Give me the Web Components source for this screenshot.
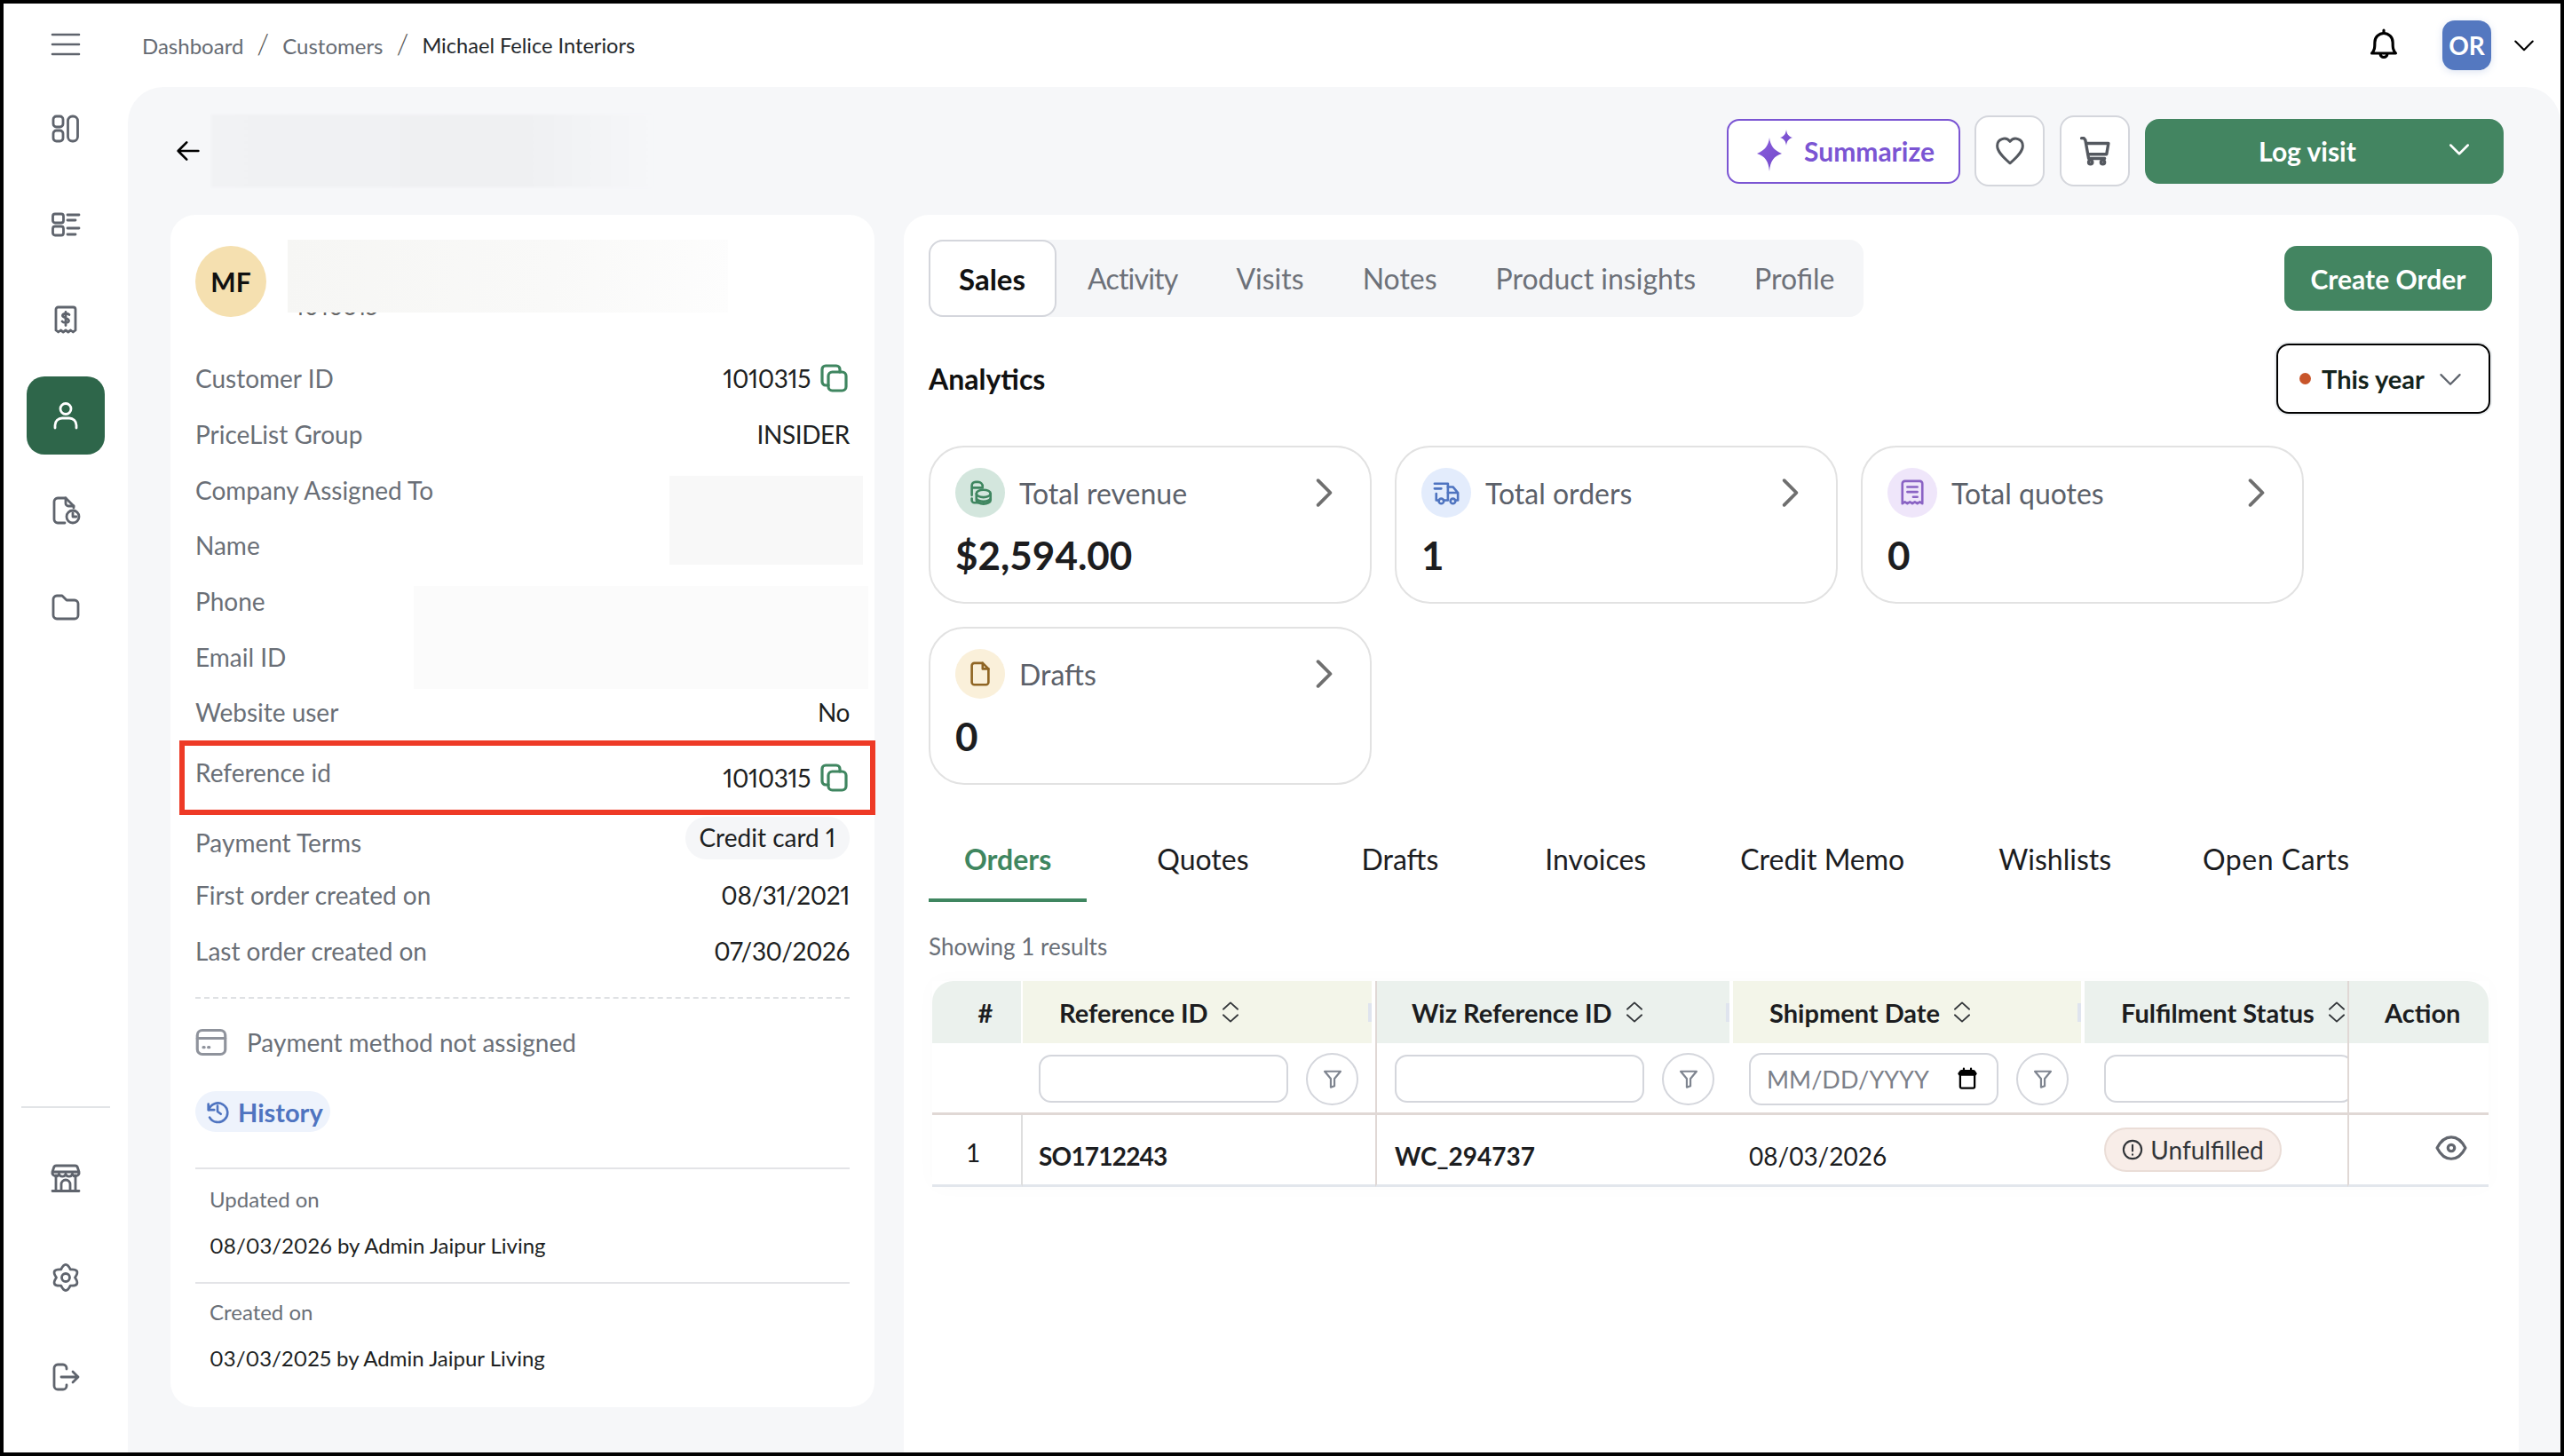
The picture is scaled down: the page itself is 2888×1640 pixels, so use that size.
<!DOCTYPE html>
<html lang="en">
<head>
<meta charset="utf-8">
<title>Michael Felice Interiors</title>
<style>
  html, body { margin: 0; height: 100%; background: #000; overflow: hidden; }
  body { font-family: "Lato", "Liberation Sans", sans-serif; }
</style>
</head>
<body>
<crm-app></crm-app>
<script>
/**
 * Icon paths, all drawn on a 32 x 32 box with a round stroke.
 */
const ICONS = {
  menu: '<path d="M1 5h30M1 16h30M1 27h30"/>',
  dashboard: '<rect x="2" y="2" width="11" height="12" rx="3.5"/><rect x="2" y="18" width="11" height="12" rx="3.5"/><rect x="18.500" y="2" width="11" height="28" rx="5"/>',
  list: '<rect x="1.500" y="4" width="12" height="10" rx="2.500"/><rect x="1.500" y="18" width="12" height="10" rx="2.500"/><path d="M18 5h13M18 11h9M18 20h13M18 27h9"/>',
  receipt: '<path d="M5 28V4.500A2.500 2.500 0 0 1 7.500 2h17A2.500 2.500 0 0 1 27 4.500V28l-2.700 2-2.700-2-2.800 2-2.800-2-2.800 2-2.800-2-2.700 2z"/><path d="M20 10.500c-1-1.500-6.500-2-7.500.5-1 3.500 7.500 2.500 7 6.500-.5 2.500-6 2.500-7.500.5M16 7.500v15"/>',
  user: '<circle cx="16" cy="8.500" r="6"/><path d="M4 30v-3a8 8 0 0 1 8-8h8a8 8 0 0 1 8 8v3"/>',
  fileclock: '<path d="M15 30H7a4 4 0 0 1-4-4V6a4 4 0 0 1 4-4h9l9 9v2"/><path d="M16 2v6a3 3 0 0 0 3 3h6"/><circle cx="24" cy="23" r="7"/><path d="M24 19v4h4"/>',
  folder: '<path d="M2 8a4 4 0 0 1 4-4h6l5 5h9a4 4 0 0 1 4 4v13a4 4 0 0 1-4 4H6a4 4 0 0 1-4-4z"/>',
  store: '<path d="M1 30.500h30M5 13v17.500M27 13v17.500M11 30.500V23a5 5 0 0 1 10 0v7.500"/><path d="M5.500 2h21a3 3 0 0 1 3 2.500L31 9a4 4 0 0 1-7.500 2.500 4 4 0 0 1-7.500 0 4 4 0 0 1-7.500 0A4 4 0 0 1 1 9l1.500-4.500a3 3 0 0 1 3-2.500zM1 9h30"/>',
  gear: '<circle cx="16" cy="16" r="4.500"/><path d="M10.750 6.900Q16-4 21.250 6.900Q33.300 6 26.500 16Q33.300 26 21.250 25.100Q16 36 10.750 25.100Q-1.300 26 5.500 16Q-1.300 6 10.750 6.900z"/>',
  logout: '<path d="M17 7V6a4 4 0 0 0-4-4H7a4 4 0 0 0-4 4v20a4 4 0 0 0 4 4h6a4 4 0 0 0 4-4v-1"/><path d="M11 16h19M24 10l6 6-6 6"/>',
  bell: '<path d="M4 24c3-3 3-6 3-11a9 9 0 0 1 18 0c0 5 0 8 3 11z"/><path d="M16 1v3M12.500 24.500a3.500 3.500 0 0 0 7 0"/>',
  chevdown: '<path d="M3 10l13 13 13-13"/>',
  chevright: '<path d="M10 3l13 13-13 13"/>',
  back: '<path d="M29 16H3M14 5L3 16l11 11"/>',
  copy: '<rect x="10" y="9" width="20" height="21" rx="4.500"/><path d="M10 24H7a4 4 0 0 1-4-4V6a4 4 0 0 1 4-4h12a4 4 0 0 1 4 4v3"/>',
  heart: '<path d="M16 29C8 22 2.500 16.500 2.500 10.500A7.500 7.500 0 0 1 16 6a7.500 7.500 0 0 1 13.500 4.500C29.500 16.500 24 22 16 29z"/>',
  cart: '<path d="M1.500 2.500h2.500l1.500 2L9 24h17"/><path d="M6.500 8H30l-2 11.500H8.500"/><circle cx="11" cy="28" r="2"/><circle cx="24" cy="28" r="2"/>',
  card: '<rect x="2" y="4" width="28" height="24" rx="5"/><path d="M2 12h28M8 21h1M13 21h1"/>',
  history: '<path d="M5 7v7h7"/><path d="M5.500 14a11.500 11.500 0 1 1 1 9"/><path d="M16 9v7l4 3"/>',
  coins: '<path d="M13 28H9a3 3 0 0 1-3-3v-2M6 19V7.500A4.500 4.500 0 0 1 10.500 3h3A5.500 5.500 0 0 1 19 8.500M6 10h13"/><ellipse cx="20" cy="17" rx="8.500" ry="4.500"/><path d="M11.500 17v8c0 2.500 4 4.500 8.500 4.500s8.500-2 8.500-4.500v-8M11.500 22c0 2.500 4 4.500 8.500 4.500s8.500-2 8.500-4.500"/>',
  truck: '<path d="M7 25H4V17M2 5h16v20h-5M2 11h8"/><path d="M18 9h6l6 7v9h-3M18 16h12"/><circle cx="10" cy="26" r="3"/><circle cx="24" cy="26" r="3"/>',
  quote: '<path d="M4 29V5a3 3 0 0 1 3-3h18a3 3 0 0 1 3 3v24l-3-2-3 2-3-2-3 2-3-2-3 2-3-2z"/><path d="M10 9h12M10 15h12M17 21h5"/>',
  doc: '<path d="M6 6a3 3 0 0 1 3-3h10l7 7v16a3 3 0 0 1-3 3H9a3 3 0 0 1-3-3z"/><path d="M19 3v7h7"/>',
  updown: '<path d="M6 12l10-9 10 9M6 20l10 9 10-9"/>',
  filter: '<path d="M3 4h26L19 16v12l-6 2V16z"/>',
  eye: '<path d="M1 16C5 8 10 4.500 16 4.500S27 8 31 16C27 24 22 27.500 16 27.500S5 24 1 16z"/><circle cx="16" cy="16" r="3.500"/>',
  alert: '<circle cx="16" cy="16" r="13.500"/><path d="M16 9v9M16 23v.5"/>',
  calendar: '<rect x="6" y="5" width="20" height="24" rx="2"/><path d="M6 9h20" stroke-width="6"/><path d="M11 2v3M21 2v3"/>'
}

/**
 * Draws one icon from the table above.
 */
customElements.define('app-icon',
  class extends HTMLElement {
    constructor () {
      super()
      this.attachShadow({ mode: 'open' })
    }

    connectedCallback () {
      const width = this.getAttribute('stroke') || 2.8
      this.shadowRoot.innerHTML = `
        <style>
          :host { display: inline-flex; width: var(--size, 32px); height: var(--size, 32px); flex: none; }
          svg { width: 100%; height: 100%; fill: none; stroke: currentColor; stroke-linecap: round; stroke-linejoin: round; overflow: visible; }
        </style>
        <svg viewBox="0 0 32 32" stroke-width="${width}">${ICONS[this.getAttribute('name')]}</svg>`
    }
  }
)

/**
 * Sidebar with the main navigation.
 */
const sidebarTemplate = document.createElement('template')
sidebarTemplate.innerHTML = `
  <style>
    :host { display: flex; flex-direction: column; align-items: center; width: 140px; height: 100%; padding-top: 30px; box-sizing: border-box; color: #5f646d; }
    .menu { --size: 32px; margin-bottom: 35px; }
    .item { width: 88px; height: 88px; margin-bottom: 19.600px; border-radius: 20px; display: flex; align-items: center; justify-content: center; --size: 32px; flex: none; }
    .item.active { background: #2e664a; color: #fff; }
    .push { flex: 1; }
    .rule { width: 100px; height: 2px; background: #e2e4e7; margin-bottom: 35px; }
    .item.low { margin-bottom: 24px; }
  </style>
  <app-icon class="menu" name="menu" stroke="2.600"></app-icon>
  <div class="item"><app-icon name="dashboard"></app-icon></div>
  <div class="item"><app-icon name="list"></app-icon></div>
  <div class="item"><app-icon name="receipt"></app-icon></div>
  <div class="item active"><app-icon name="user"></app-icon></div>
  <div class="item"><app-icon name="fileclock"></app-icon></div>
  <div class="item"><app-icon name="folder"></app-icon></div>
  <div class="push"></div>
  <div class="rule"></div>
  <div class="item low"><app-icon name="store"></app-icon></div>
  <div class="item low"><app-icon name="gear"></app-icon></div>
  <div class="item low" style="margin-bottom:41px"><app-icon name="logout"></app-icon></div>
`
customElements.define('app-sidebar',
  class extends HTMLElement {
    constructor () {
      super()
      this.attachShadow({ mode: 'open' }).appendChild(sidebarTemplate.content.cloneNode(true))
    }
  }
)

/**
 * Top bar with breadcrumbs, the bell and the user menu.
 */
const headerTemplate = document.createElement('template')
headerTemplate.innerHTML = `
  <style>
    :host { display: flex; align-items: center; height: 94px; padding: 0 29px 0 16px; box-sizing: border-box; background: #fff; flex: none; }
    .crumbs { display: flex; align-items: center; font-size: 24px; color: #666b73; }
    .crumbs i { font-style: normal; font-size: 32px; margin: 0 15px; color: #555; font-weight: 300; position: relative; top: -3px; }
    .crumbs b { font-weight: 400; color: #25282c; font-size: 23.600px; }
    .push { flex: 1; }
    .bell { --size: 36px; color: #000; margin-right: 48px; }
    .avatar { width: 55px; height: 56px; border-radius: 14px; background: #5478c0; color: #fff; font-size: 28px; font-weight: 700; display: flex; align-items: center; justify-content: center; box-shadow: 0 2px 8px rgba(84,120,192,.2); margin-right: 25px; }
    .chev { --size: 24px; color: #000; }
  </style>
  <div class="crumbs"><span>Dashboard</span><i>/</i><span>Customers</span><i>/</i><b>Michael Felice Interiors</b></div>
  <div class="push"></div>
  <app-icon class="bell" name="bell"></app-icon>
  <div class="avatar">OR</div>
  <app-icon class="chev" name="chevdown"></app-icon>
`
customElements.define('app-header',
  class extends HTMLElement {
    constructor () {
      super()
      this.attachShadow({ mode: 'open' }).appendChild(headerTemplate.content.cloneNode(true))
    }
  }
)

/**
 * Action bar above the two cards.
 */
const toolbarTemplate = document.createElement('template')
toolbarTemplate.innerHTML = `
  <style>
    :host { display: flex; align-items: center; height: 80px; margin: 0 64px 32px 0; }
    .back { --size: 28px; color: #000; margin-left: 6px; }
    .blur { width: 497px; height: 82px; margin-left: 12px; background: linear-gradient(90deg, #f1f2f4, #eff0f2 70%, #f6f7f9); filter: blur(1px); }
    .push { flex: 1; }
    button { font: inherit; display: flex; align-items: center; justify-content: center; box-sizing: border-box; background: #fff; cursor: pointer; }
    .summarize { width: 263px; height: 73px; border: 2px solid #7b55d3; border-radius: 14px; color: #7b55d3; font-size: 30px; font-weight: 700; gap: 8px; padding: 0; margin-right: 16px; }
    .summarize svg { width: 50px; height: 50px; }
    .square { width: 79px; height: 80px; border: 2px solid #d4d6dc; border-radius: 16px; margin-right: 17px; color: #54585f; padding: 0; --size: 34px; }
    .log { width: 404px; height: 73px; border: 0; border-radius: 16px; background: #438561; color: #fff; font-size: 30px; font-weight: 700; position: relative; padding-right: 44px; }
    .log app-icon { --size: 24px; position: absolute; right: 38px; top: 22px; }
  </style>
  <app-icon class="back" name="back" stroke="3"></app-icon>
  <div class="blur"></div>
  <div class="push"></div>
  <button class="summarize">
    <svg viewBox="0 0 50 50"><defs><linearGradient id="spark" x1="0" y1="0" x2="1" y2="1"><stop offset="0" stop-color="#8f63e0"/><stop offset="1" stop-color="#6b42c4"/></linearGradient></defs>
      <path fill="url(#spark)" d="M19 10c1 9 5 14 14 18-9 3-13 8-14 20-1-12-5-17-14-20 9-4 13-9 14-18zM38 1c.6 5 2.500 7.500 7 9-4.500 1.500-6.400 4-7 9-.6-5-2.500-7.500-7-9 4.500-1.500 6.400-4 7-9z"/></svg>
    Summarize
  </button>
  <button class="square"><app-icon name="heart"></app-icon></button>
  <button class="square"><app-icon name="cart" stroke="3.200"></app-icon></button>
  <button class="log">Log visit<app-icon name="chevdown" stroke="3.400"></app-icon></button>
`
customElements.define('page-toolbar',
  class extends HTMLElement {
    constructor () {
      super()
      this.attachShadow({ mode: 'open' }).appendChild(toolbarTemplate.content.cloneNode(true))
    }
  }
)

/**
 * One label and value line of the customer card.
 */
const rowTemplate = document.createElement('template')
rowTemplate.innerHTML = `
  <style>
    :host { display: flex; justify-content: space-between; align-items: center; height: var(--row, 62.700px); font-size: 28px; color: #1d1f22; font-variant-numeric: proportional-nums; }
    .label { color: #6a6f77; }
    .value { display: flex; align-items: center; gap: 10px; letter-spacing: -.4px; }
  </style>
  <span class="label"><slot name="label"></slot></span>
  <span class="value"><slot></slot></span>
`
customElements.define('detail-row',
  class extends HTMLElement {
    constructor () {
      super()
      this.attachShadow({ mode: 'open' }).appendChild(rowTemplate.content.cloneNode(true))
    }
  }
)

/**
 * Customer card on the left.
 */
const customerTemplate = document.createElement('template')
customerTemplate.innerHTML = `
  <style>
    :host { display: block; position: relative; box-sizing: border-box; height: 1343px; padding: 35px 28px 0; background: #fff; border-radius: 28px; }
    .top { display: flex; align-items: center; height: 80px; margin-bottom: 38px; gap: 24px; }
    .avatar { width: 80px; height: 80px; border-radius: 50%; background: #f5e0b0; font-size: 30px; font-weight: 700; color: #111; display: flex; align-items: center; justify-content: center; }
    .code { font-size: 26px; color: #666; padding: 55px 0 0 8px; font-variant-numeric: proportional-nums; }
    .patch { position: absolute; }
    .copy { --size: 32px; color: #3f8660; margin-right: 2px; }
    .pill { display: inline-block; margin-top: 5px; padding: 0 16px; height: 48px; line-height: 46px; background: #f5f6f8; border-radius: 24px; letter-spacing: 0; }
    .terms { --row: 62px; align-items: flex-start; }
    .terms span[slot=label] { display: block; margin-top: 17px; }
    .ref { --row: 81px; }
    .ref span[slot=label] { display: block; position: relative; top: -4px; }
    .nudge { display: flex; align-items: center; gap: 10px; margin-top: 3px; }
    .frame { position: absolute; left: 10px; top: 592px; width: 784px; height: 84px; box-sizing: border-box; border: 6px solid #ee3a26; pointer-events: none; }
    .dash { border-top: 2px dashed #dfe1e4; margin-top: 21px; }
    .method { display: flex; align-items: center; gap: 22px; height: 98px; margin-bottom: 6px; font-size: 28px; color: #6a6f77; }
    .method app-icon { --size: 36px; color: #8f939c; }
    .history { display: inline-flex; align-items: center; gap: 8px; height: 46px; padding: 0 10px; width: 152px; box-sizing: border-box; background: #eef3fc; border-radius: 23px; color: #4f74c0; font-size: 29px; font-weight: 700; --size: 30px; }
    .audit { border-top: 2px solid #e3e4e7; padding: 0 16px; height: 127px; display: flex; flex-direction: column; font-size: 24px; color: #1d1f22; font-variant-numeric: proportional-nums; }
    .audit span { color: #6a6f77; margin: 19px 0 22px; line-height: 30px; }
    .audit.late span { margin-top: 17px; }
    .audit div { line-height: 30px; }
  </style>
  <div class="top">
    <div class="avatar">MF</div>
    <div class="code">1010315</div>
  </div>
  <div class="patch" style="left:132px;top:28px;width:496px;height:82px;background:linear-gradient(100deg,#f6f6f4,#f9f9f8 60%,#fdfdfd)"></div>
  <div class="patch" style="left:562px;top:294px;width:218px;height:100px;background:#f8f8f8"></div>
  <div class="patch" style="left:274px;top:418px;width:512px;height:116px;background:#fbfbfb"></div>
  <detail-row><span slot="label">Customer ID</span>1010315<app-icon class="copy" name="copy" stroke="3.200"></app-icon></detail-row>
  <detail-row><span slot="label">PriceList Group</span>INSIDER</detail-row>
  <detail-row><span slot="label">Company Assigned To</span></detail-row>
  <detail-row><span slot="label">Name</span></detail-row>
  <detail-row><span slot="label">Phone</span></detail-row>
  <detail-row><span slot="label">Email ID</span></detail-row>
  <detail-row><span slot="label">Website user</span>No</detail-row>
  <detail-row class="ref"><span slot="label">Reference id</span><span class="nudge">1010315<app-icon class="copy" name="copy" stroke="3.200"></app-icon></span></detail-row>
  <detail-row class="terms"><span slot="label">Payment Terms</span><span class="pill">Credit card 1</span></detail-row>
  <detail-row><span slot="label">First order created on</span>08/31/2021</detail-row>
  <detail-row><span slot="label">Last order created on</span>07/30/2026</detail-row>
  <div class="frame"></div>
  <div class="dash"></div>
  <div class="method"><app-icon name="card"></app-icon>Payment method not assigned</div>
  <div class="history"><app-icon name="history"></app-icon>History</div>
  <div style="height:40px"></div>
  <div class="audit"><span>Updated on</span><div>08/03/2026 by Admin Jaipur Living</div></div>
  <div class="audit late"><span>Created on</span><div>03/03/2025 by Admin Jaipur Living</div></div>
`
customElements.define('customer-card',
  class extends HTMLElement {
    constructor () {
      super()
      this.attachShadow({ mode: 'open' }).appendChild(customerTemplate.content.cloneNode(true))
    }
  }
)

/**
 * One number tile of the analytics grid.
 */
const statTemplate = document.createElement('template')
statTemplate.innerHTML = `
  <style>
    :host { display: block; box-sizing: border-box; height: 178px; padding: 23px 28px 0; border: 2px solid #e2e2e2; border-radius: 40px; background: #fff; }
    .head { display: flex; align-items: center; gap: 16px; height: 56px; font-size: 32px; color: #5c616a; }
    .circle { width: 56px; height: 56px; border-radius: 50%; background: var(--tint); color: var(--ink); display: flex; align-items: center; justify-content: center; --size: 30px; }
    .title { flex: 1; }
    .arrow { --size: 34px; color: #6f6f6f; margin-right: 7px; }
    .value { font-size: 44px; font-weight: 700; color: #1c1d1f; margin-top: 16px; line-height: 52px; }
  </style>
  <div class="head">
    <div class="circle"><slot name="icon"></slot></div>
    <div class="title"><slot name="title"></slot></div>
    <app-icon class="arrow" name="chevright" stroke="3.600"></app-icon>
  </div>
  <div class="value"><slot></slot></div>
`
customElements.define('stat-card',
  class extends HTMLElement {
    constructor () {
      super()
      this.attachShadow({ mode: 'open' }).appendChild(statTemplate.content.cloneNode(true))
    }
  }
)

/**
 * Orders table.
 */
const tableTemplate = document.createElement('template')
tableTemplate.innerHTML = `
  <style>
    :host { display: grid; grid-template-columns: 102px 397px 403px 396px 296px 159px; grid-template-rows: 70px 81px 81px; width: 1753px; margin-left: 4px; font-size: 28px; color: #1c1d1f; background: #fff; box-shadow: 0 0 24px rgba(0,0,0,.02); }
    .head { display: flex; align-items: center; font-size: 29px; font-weight: 700; margin-right: 4px; padding-left: 41px; position: relative; gap: 12px; background: var(--bg); white-space: nowrap; }
    .head.wall { padding-left: 39px; }
    .head app-icon { --size: 26px; color: #33363a; }
    .head.tick::after { content: ""; position: absolute; right: 0; top: 25px; width: 4px; height: 21px; background: #dfe4ee; }
    .green { --bg: #ebf1ed; }
    .lime { --bg: #f3f5e9; }
    .num { justify-content: center; padding: 0 0 0 20px; margin-right: 2px; border-top-left-radius: 24px; }
    .action { padding-left: 40px; margin: 0; border-top-right-radius: 24px; border-left: 2px solid #e0d8d5; }
    .wall { border-left: 2px solid #e0d8d5; }
    .filter { display: flex; align-items: center; gap: 20px; padding: 2px 0 0 18px; border-bottom: 3px solid #e0d8d5; overflow: hidden; min-width: 0; }
    .filter.wall { padding-left: 20px; }
    .filter.no-pad { padding-left: 0; }
    .filter.status { padding-left: 22px; }
    .field { box-sizing: border-box; width: 281px; height: 54px; border: 2px solid #d4d6dc; border-radius: 14px; background: #fff; flex: none; }
    .field.date { height: 59px; color: #7c8089; font-size: 27px; display: flex; align-items: center; justify-content: space-between; padding: 0 20px 0 18px; }
    .field.date app-icon { --size: 26px; color: #000; }
    .round { box-sizing: border-box; width: 59px; height: 59px; border: 2px solid #d4d6dc; border-radius: 50%; display: flex; align-items: center; justify-content: center; color: #7f8590; --size: 22px; flex: none; }
    .cell { display: flex; align-items: center; padding: 13px 0 0 18px; border-bottom: 3px solid #e2e6ec; }
    .cell.wall { padding-left: 20px; }
    .cell.status { padding-left: 22px; }
    .idx { justify-content: center; padding: 6px 8px 0 0; border-right: 2px solid #dedede; }
    .strong { font-weight: 700; }
    .tight { letter-spacing: -.8px; }
    .badge { display: inline-flex; align-items: center; gap: 8px; height: 50px; width: 200px; box-sizing: border-box; justify-content: center; margin-top: -13px; border: 2px solid #eaddd7; border-radius: 25px; background: #f8ede8; --size: 24px; font-size: 28px; color: #33363a; }
    .cell.eye { justify-content: flex-end; padding: 20px 25px 0 0; color: #62666e; --size: 34px; align-items: flex-start; }
  </style>
  <div class="head num green">#</div>
  <div class="head lime tick">Reference ID<app-icon name="updown" stroke="2.200"></app-icon></div>
  <div class="head green tick wall">Wiz Reference ID<app-icon name="updown" stroke="2.200"></app-icon></div>
  <div class="head lime tick">Shipment Date<app-icon name="updown" stroke="2.200"></app-icon></div>
  <div class="head green" style="margin:0;padding-right:0">Fulfilment Status<app-icon name="updown" stroke="2.200"></app-icon></div>
  <div class="head green action">Action</div>

  <div class="filter no-pad"></div>
  <div class="filter"><div class="field"></div><div class="round"><app-icon name="filter" stroke="3.200"></app-icon></div></div>
  <div class="filter wall"><div class="field"></div><div class="round"><app-icon name="filter" stroke="3.200"></app-icon></div></div>
  <div class="filter"><div class="field date">MM/DD/YYYY<app-icon name="calendar"></app-icon></div><div class="round"><app-icon name="filter" stroke="3.200"></app-icon></div></div>
  <div class="filter status"><div class="field"></div></div>
  <div class="filter no-pad wall"></div>

  <div class="cell idx">1</div>
  <div class="cell strong tight">SO1712243</div>
  <div class="cell strong wall">WC_294737</div>
  <div class="cell">08/03/2026</div>
  <div class="cell status"><span class="badge"><app-icon name="alert"></app-icon>Unfulfilled</span></div>
  <div class="cell eye wall"><app-icon name="eye" stroke="3"></app-icon></div>
`
customElements.define('orders-table',
  class extends HTMLElement {
    constructor () {
      super()
      this.attachShadow({ mode: 'open' }).appendChild(tableTemplate.content.cloneNode(true))
    }
  }
)

/**
 * Sales panel on the right.
 */
const salesTemplate = document.createElement('template')
salesTemplate.innerHTML = `
  <style>
    :host { display: block; box-sizing: border-box; padding: 28px 30px 0 28px; background: #fff; border-radius: 28px 28px 0 0; height: 100%; }
    .tabs-row { display: flex; justify-content: space-between; align-items: center; height: 87px; }
    .tabs { display: flex; align-items: center; height: 87px; border-radius: 16px; background: #f5f6f8; font-size: 32px; color: #6d7179; }
    .tabs span { padding: 0 33px; }
    .tabs .on { display: flex; align-items: center; height: 100%; box-sizing: border-box; background: #fff; border: 2px solid #d4d6dc; border-radius: 16px; color: #111; font-weight: 700; font-size: 33px; padding: 0 33px 0 32px; }
    .tabs .narrow { letter-spacing: -.8px; margin-left: 2px; }
    .create { box-sizing: border-box; width: 234px; height: 73px; border: 0; padding: 0; border-radius: 14px; background: #438561; color: #fff; font: inherit; font-size: 30px; font-weight: 700; }
    .title-row { display: flex; justify-content: space-between; align-items: center; height: 79px; margin: 30px 2px 36px 0; }
    h2 { margin: 0; font-size: 32px; font-weight: 700; color: #111; }
    .range { display: flex; align-items: center; box-sizing: border-box; width: 241px; height: 79px; padding: 0 18px 0 24px; gap: 12px; border: 2px solid #000; border-radius: 14px; font-size: 29px; font-weight: 700; color: #13231c; box-shadow: 0 0 0 2px #eceff1; }
    .range i { width: 13px; height: 13px; border-radius: 50%; background: #c8552a; }
    .range app-icon { --size: 26px; color: #5f646d; margin-left: 4px; }
    .grid { display: grid; grid-template-columns: repeat(3, 499px); gap: 26px; }
    .sub { display: flex; align-items: center; height: 73px; margin-top: 47px; font-size: 32px; color: #1c1d1f; }
    .sub span { position: relative; padding: 0 40px; line-height: 73px; }
    .sub .on { color: #3f8660; font-weight: 700; }
    .sub .on::after { content: ""; position: absolute; left: 0; right: 0; bottom: -12px; height: 4px; background: #3f8660; }
    .count { font-size: 26px; color: #6a6f77; line-height: 32px; margin: 46px 0 23px; }
  </style>
  <div class="tabs-row">
    <div class="tabs"><span class="on">Sales</span><span class="narrow">Activity</span><span>Visits</span><span>Notes</span><span>Product insights</span><span>Profile</span></div>
    <button class="create">Create Order</button>
  </div>
  <div class="title-row">
    <h2>Analytics</h2>
    <div class="range"><i></i>This year<app-icon name="chevdown" stroke="2.800"></app-icon></div>
  </div>
  <div class="grid">
    <stat-card style="--tint:#d3e6dd;--ink:#3f8660"><app-icon slot="icon" name="coins"></app-icon><span slot="title">Total revenue</span>$2,594.00</stat-card>
    <stat-card style="--tint:#e3ecfc;--ink:#4f74c0"><app-icon slot="icon" name="truck"></app-icon><span slot="title">Total orders</span>1</stat-card>
    <stat-card style="--tint:#efe6fa;--ink:#8a63c4"><app-icon slot="icon" name="quote"></app-icon><span slot="title">Total quotes</span>0</stat-card>
    <stat-card style="--tint:#faf0da;--ink:#8f6524"><app-icon slot="icon" name="doc"></app-icon><span slot="title">Drafts</span>0</stat-card>
  </div>
  <div class="sub"><span class="on">Orders</span><span style="margin-left:39px">Quotes</span><span style="margin-left:47px">Drafts</span><span style="margin-left:40px">Invoices</span><span style="margin-left:26px">Credit Memo</span><span style="margin-left:26px">Wishlists</span><span style="margin-left:23px;letter-spacing:.5px">Open Carts</span></div>
  <div class="count">Showing 1 results</div>
  <orders-table></orders-table>
`
customElements.define('sales-panel',
  class extends HTMLElement {
    constructor () {
      super()
      this.attachShadow({ mode: 'open' }).appendChild(salesTemplate.content.cloneNode(true))
    }
  }
)

/**
 * Whole page: sidebar, header and the grey work area.
 */
const appTemplate = document.createElement('template')
appTemplate.innerHTML = `
  <style>
    :host { display: flex; box-sizing: border-box; width: 2888px; height: 1640px; border: 4px solid #000; background: #fff; overflow: hidden; }
    .right { display: flex; flex-direction: column; flex: 1; min-width: 0; height: 100%; }
    .work { flex: 1; min-height: 0; display: flex; flex-direction: column; padding: 32px 0 0 48px; background: #f6f7f9; border-radius: 40px 40px 0 0; }
    .cards { flex: 1; min-height: 0; display: grid; grid-template-columns: 793px 1819px; gap: 33px; align-items: stretch; }
    customer-card { align-self: start; }
  </style>
  <app-sidebar></app-sidebar>
  <div class="right">
    <app-header></app-header>
    <div class="work">
      <page-toolbar></page-toolbar>
      <div class="cards">
        <customer-card></customer-card>
        <sales-panel></sales-panel>
      </div>
    </div>
  </div>
`
customElements.define('crm-app',
  class extends HTMLElement {
    constructor () {
      super()
      this.attachShadow({ mode: 'open' }).appendChild(appTemplate.content.cloneNode(true))
    }
  }
)
</script>
</body>
</html>
